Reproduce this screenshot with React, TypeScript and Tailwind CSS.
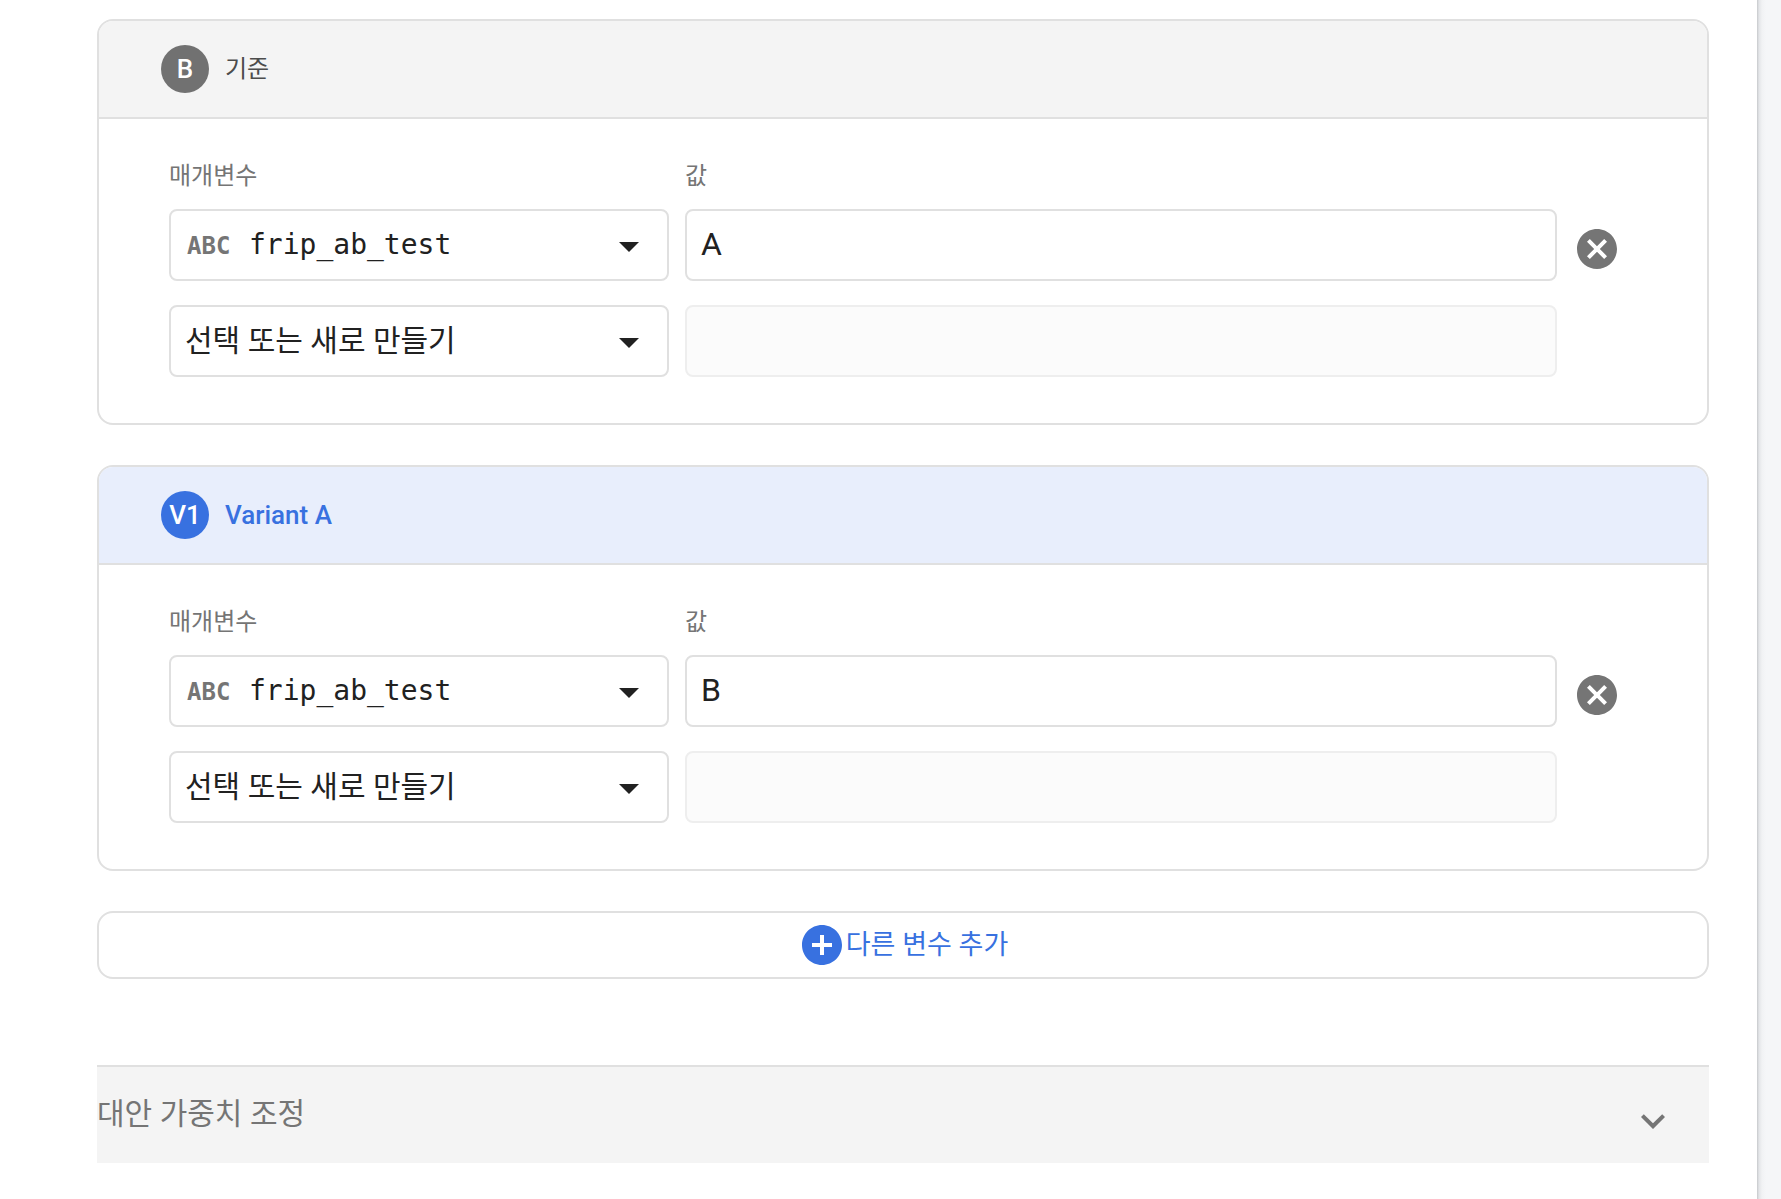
import { useId, useState } from 'react'
import { MdAddCircle, MdArrowDropDown, MdCancel, MdKeyboardArrowDown } from 'react-icons/md'

interface Variant {
  id: string
  badge: string
  name: string
  value: string
  baseline: boolean
}

const INITIAL_VARIANTS: Variant[] = [
  { id: 'baseline', badge: 'B', name: '기준', value: 'A', baseline: true },
  { id: 'variant-a', badge: 'V1', name: 'Variant A', value: 'B', baseline: false },
]

export default function App() {
  const [variants, setVariants] = useState(INITIAL_VARIANTS)

  const setValue = (id: string, value: string) => {
    setVariants((prev) => prev.map((v) => (v.id === id ? { ...v, value } : v)))
  }

  const addVariant = () => {
    setVariants((prev) => [
      ...prev,
      {
        id: `variant-${prev.length}`,
        badge: `V${prev.length}`,
        name: `Variant ${String.fromCharCode(64 + prev.length)}`,
        value: '',
        baseline: false,
      },
    ])
  }

  return (
    <div className="flex min-h-screen bg-white font-[Roboto,'Noto_Sans_CJK_KR',sans-serif] text-[#212121]">
      <main className="flex-1 pt-[19px] pr-12 pb-9 pl-[97px]">
        <div className="flex flex-col gap-10">
          {variants.map((variant) => (
            <VariantCard
              key={variant.id}
              variant={variant}
              onValueChange={(value) => setValue(variant.id, value)}
            />
          ))}
          <button
            type="button"
            onClick={addVariant}
            className="flex h-[68px] items-center justify-center rounded-2xl border-2 border-[#e0e0e0] text-[27px] text-[#3871e0]"
          >
            <MdAddCircle className="size-12" />
            다른 변수 추가
          </button>
        </div>

        {/* Weights */}
        <button
          type="button"
          className="mt-[86px] flex w-full justify-between border-t-2 border-[#e0e0e0] bg-[#f4f4f4] pt-6 pr-8 pb-[18px] text-[30px] text-[#757575]"
        >
          <span className="leading-[46px]">대안 가중치 조정</span>
          <MdKeyboardArrowDown className="mt-1.5 size-12" />
        </button>
      </main>

      {/* Page edge */}
      <div className="w-6 bg-[linear-gradient(to_right,#c6c8cb,#e3e5e8_2px,#f1f2f4_5px,#f5f6f8_9px)]" />
    </div>
  )
}

function VariantCard({
  variant,
  onValueChange,
}: {
  variant: Variant
  onValueChange: (value: string) => void
}) {
  const id = useId()

  return (
    <section className="overflow-hidden rounded-2xl border-2 border-[#e0e0e0]">
      <header
        className={`flex items-center gap-4 border-b-2 border-[#e0e0e0] py-6 pl-[62px] ${
          variant.baseline ? 'bg-[#f4f4f4] text-[#4c4c4c]' : 'bg-[#e8eefc] text-[#3871e0]'
        }`}
      >
        <span
          className={`flex size-12 items-center justify-center rounded-full text-[26px] font-medium text-white ${
            variant.baseline ? 'bg-[#717171]' : 'bg-[#3871e0]'
          }`}
        >
          {variant.badge}
        </span>
        <h2 className={variant.baseline ? 'text-2xl' : 'text-[26px] font-medium'}>{variant.name}</h2>
      </header>

      <div className="grid grid-cols-[500px_1fr_48px] gap-x-4 pt-[41px] pr-[86px] pb-[46px] pl-[70px]">
        <label htmlFor={`${id}-param`} className="mb-[17px] text-2xl text-[#757575]">
          매개변수
        </label>
        <label htmlFor={`${id}-value`} className="col-span-2 mb-[17px] text-2xl text-[#757575]">
          값
        </label>

        <div className="relative">
          <select
            id={`${id}-param`}
            className="h-[72px] w-full appearance-none rounded-lg border-2 border-[#e0e0e0] bg-white pl-[78px] font-['DejaVu_Sans_Mono',monospace] text-[28px]"
          >
            <option>frip_ab_test</option>
          </select>
          <span className="pointer-events-none absolute inset-y-0 left-[18px] flex items-center pt-0.5 font-['DejaVu_Sans_Mono',monospace] text-2xl font-bold text-[#757575]">
            ABC
          </span>
          <Caret />
        </div>
        <input
          id={`${id}-value`}
          type="text"
          value={variant.value}
          onChange={(e) => onValueChange(e.target.value)}
          className="h-[72px] min-w-0 rounded-lg border-2 border-[#e0e0e0] px-3.5 pb-0.5 text-[32px]"
        />
        <button type="button" aria-label="삭제" className="self-end pb-2 text-[#757575]">
          <MdCancel className="size-12" />
        </button>

        <div className="relative mt-6">
          <select
            aria-label="매개변수"
            className="h-[72px] w-full appearance-none rounded-lg border-2 border-[#e0e0e0] bg-white pb-0.5 pl-3.5 text-[30px]"
          >
            <option>선택 또는 새로 만들기</option>
          </select>
          <Caret />
        </div>
        <input
          type="text"
          aria-label="값"
          disabled
          className="mt-6 h-[72px] min-w-0 rounded-lg border-2 border-[#eeeeee] bg-[#fbfbfb] px-3.5 pb-0.5 text-[32px]"
        />
      </div>
    </section>
  )
}

function Caret() {
  return <MdArrowDropDown className="pointer-events-none absolute top-[13px] right-4 size-12" />
}
